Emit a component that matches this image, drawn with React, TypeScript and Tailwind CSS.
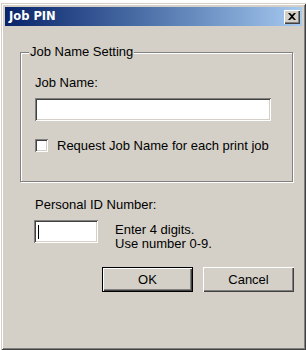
import React from 'react';

const sunken =
    'bg-white shadow-[inset_1px_1px_0_#808080,inset_-1px_-1px_0_#ffffff,inset_2px_2px_0_#404040,inset_-2px_-2px_0_#d4d0c8]';

const raised =
    'bg-[#d4d0c8] shadow-[inset_1px_1px_0_#ffffff,inset_-1px_-1px_0_#404040,inset_-2px_-2px_0_#808080]';

function CloseButton() {
    return (
        <div className={`w-[16px] h-[14px] flex items-center justify-center ${raised}`}>
            <svg width="8" height="7" viewBox="0 0 8 7" className="-mt-px">
                <path d="M0 0h2l2 2 2-2h2L5 3.5 8 7H6L4 5 2 7H0l3-3.5z" fill="#000" />
            </svg>
        </div>
    );
}

export default function App() {
    return (
        <div className="w-[306px] h-[350px] bg-white pl-[1px] pt-[3px] font-['Liberation_Sans',Arial,sans-serif] text-[13px] text-black">
            <div className="w-[305px] h-[347px] bg-[#d4d0c8] p-[4px] shadow-[inset_1px_1px_0_#d4d0c8,inset_-1px_-1px_0_#404040,inset_2px_2px_0_#ffffff,inset_-2px_-2px_0_#808080]">
                {/* title bar */}
                <div className="h-[19px] flex items-center justify-between pl-[4px] pr-[2px] bg-gradient-to-r from-[#0a246a] to-[#a6caf0]">
                    <span className="text-white font-bold text-[11.5px] font-['DejaVu_Sans',Verdana,sans-serif] leading-none">
                        Job PIN
                    </span>
                    <CloseButton />
                </div>

                <div className="pl-[15px]">
                    {/* group box */}
                    <div className="relative mt-[26px] w-[273px] h-[130px] border border-[#808080] shadow-[1px_1px_0_#ffffff,inset_1px_1px_0_#ffffff] pl-[14px] pt-[22px]">
                        <span className="absolute left-[8px] top-[-9px] bg-[#d4d0c8] px-[1px] leading-[15px]">
                            Job Name Setting
                        </span>
                        <div className="leading-[15px]">Job Name:</div>
                        <div className={`mt-[8px] w-[236px] h-[23px] ${sunken}`} />
                        <div className="mt-[17px] flex items-center gap-[9px]">
                            <div className={`w-[13px] h-[13px] ${sunken}`} />
                            <span className="leading-[15px]">Request Job Name for each print job</span>
                        </div>
                    </div>

                    <div className="pl-[15px]">
                        <div className="mt-[15px] leading-[15px]">Personal ID Number:</div>
                        <div className="mt-[8px] flex">
                            <div className={`-ml-px w-[64px] h-[23px] flex items-center pl-[4px] ${sunken}`}>
                                <div className="w-px h-[14px] bg-black" />
                            </div>
                            <div className="ml-[17px] mt-[3px] leading-[14px]">
                                <div>Enter 4 digits.</div>
                                <div>Use number 0-9.</div>
                            </div>
                        </div>
                    </div>

                    <div className="mt-[16px] ml-[82px] flex gap-[10px]">
                        <button className="w-[91px] h-[25px] border border-black bg-[#d4d0c8] shadow-[inset_1px_1px_0_#ffffff,inset_-1px_-1px_0_#404040,inset_-2px_-2px_0_#808080] leading-none">
                            OK
                        </button>
                        <button className={`w-[91px] h-[25px] leading-none ${raised}`}>Cancel</button>
                    </div>
                </div>
            </div>
        </div>
    );
}
